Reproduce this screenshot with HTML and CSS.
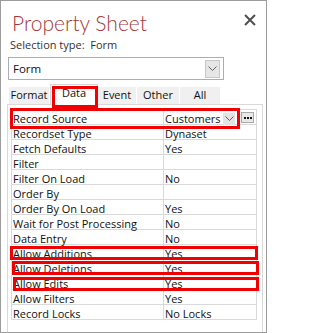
FILE: index.html
```html
<!DOCTYPE html>
<html>
<head>
<meta charset="utf-8">
<link rel="stylesheet" href="styles.css">
</head>
<body>
<div class="window">
  <div class="header">
    <h1 class="title">Property Sheet</h1>
    <svg class="close" width="12" height="12" viewBox="0 0 12 12"><path d="M1 1L11 11M11 1L1 11" stroke="#505050" stroke-width="2"/></svg>
  </div>
  <div class="selection">Selection type:&nbsp; Form</div>
  <div class="combo">
    <span class="combo-text">Form</span>
    <span class="combo-btn"><svg width="9" height="6" viewBox="0 0 9 6"><path d="M0.5 0.5L4.5 4.5L8.5 0.5" fill="none" stroke="#606060" stroke-width="1"/></svg></span>
  </div>
  <div class="tabs">
    <div class="tab tab-format">Format</div>
    <div class="tab tab-data active">Data</div>
    <div class="tab tab-event">Event</div>
    <div class="tab tab-other">Other</div>
    <div class="tab tab-all">All</div>
  </div>
  <div class="panel">
    <div class="grid">
      <div class="row">
        <div class="label">Record Source</div>
        <div class="value value-rs">
          <span class="value-text">Customers</span>
          <span class="dd-btn"><svg width="9" height="6" viewBox="0 0 9 6"><path d="M0.5 0.5L4.5 4.5L8.5 0.5" fill="none" stroke="#606060" stroke-width="1"/></svg></span>
          <span class="ell-btn"><svg width="8" height="2" viewBox="0 0 8 2"><rect x="0" y="0" width="2" height="2" fill="#111"/><rect x="3" y="0" width="2" height="2" fill="#111"/><rect x="6" y="0" width="2" height="2" fill="#111"/></svg></span>
        </div>
      </div>
      <div class="row"><div class="label">Recordset Type</div><div class="value">Dynaset</div></div>
      <div class="row"><div class="label">Fetch Defaults</div><div class="value">Yes</div></div>
      <div class="row"><div class="label">Filter</div><div class="value"></div></div>
      <div class="row"><div class="label">Filter On Load</div><div class="value">No</div></div>
      <div class="row"><div class="label">Order By</div><div class="value"></div></div>
      <div class="row"><div class="label">Order By On Load</div><div class="value">Yes</div></div>
      <div class="row"><div class="label">Wait for Post Processing</div><div class="value">No</div></div>
      <div class="row"><div class="label">Data Entry</div><div class="value">No</div></div>
      <div class="row"><div class="label">Allow Additions</div><div class="value">Yes</div></div>
      <div class="row"><div class="label">Allow Deletions</div><div class="value">Yes</div></div>
      <div class="row"><div class="label">Allow Edits</div><div class="value">Yes</div></div>
      <div class="row"><div class="label">Allow Filters</div><div class="value">Yes</div></div>
      <div class="row"><div class="label">Record Locks</div><div class="value">No Locks</div></div>
    </div>
  </div>
  <div class="mark mark-data"></div>
  <div class="mark mark-rs"></div>
  <div class="mark mark-add"></div>
  <div class="mark mark-del"></div>
  <div class="mark mark-edit"></div>
</div>
</body>
</html>
```

FILE: styles.css
```css
html, body {
  margin: 0;
  padding: 0;
  background: #fff;
}

.window {
  position: relative;
  width: 267px;
  height: 333px;
  box-sizing: border-box;
  border: 1px solid #9c9c9c;
  background: #fff;
  display: flex;
  flex-direction: column;
  font-family: "Open Sans", "Noto Sans", sans-serif;
  color: #1e1e1e;
  overflow: hidden;
}

.header {
  display: flex;
  justify-content: space-between;
  align-items: flex-start;
  padding: 10px 10px 0 11px;
  height: 24px;
}

.title {
  margin: 0;
  font-family: "Lato", "Open Sans", sans-serif;
  font-size: 21px;
  line-height: 24px;
  font-weight: 300;
  color: #a4373a;
}

.close {
  margin-top: 3px;
}

.selection {
  margin-top: 3px;
  font-size: 11px;
  line-height: 13px;
  height: 13px;
  padding-left: 9px;
  color: #333;
}

.combo {
  margin: 6px 0 0 7px;
  width: 216px;
  height: 23px;
  box-sizing: border-box;
  border: 1px solid #abadb3;
  display: flex;
  align-items: center;
  justify-content: space-between;
  padding: 0 3px 0 4px;
}

.combo-text {
  font-size: 11.5px;
  line-height: 14px;
  color: #111;
}

.combo-btn {
  width: 15px;
  height: 18px;
  box-sizing: border-box;
  border: 1px solid #c8c8c8;
  background: #e6e6e6;
  display: flex;
  align-items: center;
  justify-content: center;
}

.tabs {
  display: flex;
  align-items: flex-end;
  margin: 4px 0 -1px 8px;
  height: 21px;
  position: relative;
  z-index: 1;
}

.tab {
  height: 17px;
  margin-bottom: 1px;
  box-sizing: border-box;
  background: #f0f0f0;
  border-right: 1px solid #fff;
  font-size: 11px;
  line-height: 16px;
  text-align: center;
  color: #111;
}

.tab-format { width: 41px; }
.tab-data { width: 48px; }
.tab-event { width: 39px; }
.tab-other { width: 43px; }
.tab-all { width: 41px; }

.tab.active {
  height: 21px;
  margin-bottom: 0;
  background: #fff;
  border: 1px solid #d6d6d6;
  border-bottom: none;
  line-height: 16px;
}

.panel {
  flex: 1;
  margin-left: 6px;
  width: 256px;
  box-sizing: border-box;
  border: 1px solid #d9d9d9;
  border-bottom: none;
  padding: 4px 0 0 3px;
}

.grid {
  width: 246px;
  box-sizing: border-box;
  border: 1px solid #d9d9d9;
  border-bottom: none;
}

.row {
  display: flex;
  height: 15px;
  box-sizing: border-box;
  border-bottom: 1px solid #d9d9d9;
  font-size: 11px;
  color: #111;
}

.label {
  width: 152px;
  height: 14px;
  box-sizing: border-box;
  border-right: 1px solid #d9d9d9;
  padding: 3px 0 0 1px;
  line-height: 11px;
  white-space: nowrap;
}

.value {
  flex: 1;
  height: 14px;
  box-sizing: border-box;
  padding: 3px 0 0 1px;
  line-height: 11px;
  white-space: nowrap;
}

.value-rs {
  display: flex;
  align-items: flex-start;
}

.value-text {
  flex: 1;
}

.dd-btn {
  width: 12px;
  height: 12px;
  margin-top: 0px;
  background: #e3e3e3;
  display: flex;
  align-items: center;
  justify-content: center;
}

.ell-btn {
  width: 13px;
  height: 11px;
  box-sizing: border-box;
  margin: -1px 2px 0 6px;
  border: 1px solid #a9a9a9;
  background: #e8e8e8;
  display: flex;
  align-items: center;
  justify-content: center;
}

.mark {
  position: absolute;
  box-sizing: border-box;
  border: 3px solid #f00000;
  z-index: 5;
}

.mark-data { left: 51px; top: 85px; width: 46px; height: 22px; }
.mark-rs { left: 9px; top: 107px; width: 230px; height: 21px; }
.mark-add { left: 9px; top: 245px; width: 248px; height: 14px; }
.mark-del { left: 11px; top: 260px; width: 247px; height: 14px; }
.mark-edit { left: 12px; top: 276px; width: 246px; height: 14px; }
```
